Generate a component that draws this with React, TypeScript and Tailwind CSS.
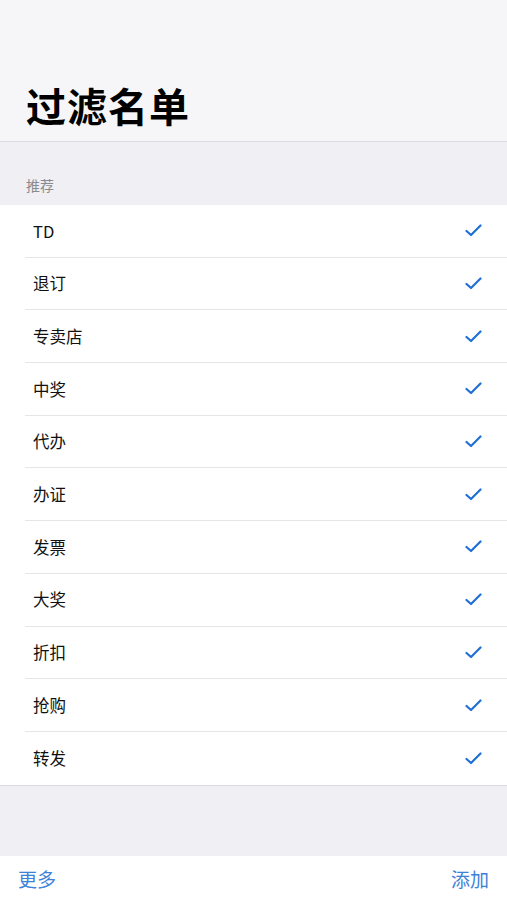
import React from "react";

const items = ["TD", "退订", "专卖店", "中奖", "代办", "办证", "发票", "大奖", "折扣", "抢购", "转发"];

function Check() {
  return (
    <svg width="17" height="13" viewBox="0 0 17 13" fill="none">
      <path d="M1.5 7 L6 11 L15.5 1.5" stroke="#1f6fd6" strokeWidth="2.2" strokeLinecap="round" strokeLinejoin="round" />
    </svg>
  );
}

export default function App() {
  const font = { fontFamily: '"Noto Sans CJK SC", "Noto Sans", sans-serif' };
  return (
    <div className="w-[507px] h-[900px] flex flex-col bg-[#efeff4] overflow-hidden" style={font}>
      <div className="h-[142px] bg-[#f6f6f8] border-b border-[#dcdce0] flex items-end pl-[26px] pb-[10px]">
        <h1 className="text-[40px] leading-[52px] font-semibold text-black tracking-[1px]">过滤名单</h1>
      </div>
      <div className="h-[63px] flex items-end pl-[26px] pb-[10px]">
        <span className="text-[14px] leading-[20px] text-[#8a8a8f]">推荐</span>
      </div>
      <div className="bg-white">
        {items.map((t, i) => (
          <div key={t} className="flex">
            <div className={"flex-1 ml-[25px] h-[52.7px] flex items-center justify-between pl-[8px] pr-[25px] " + (i < items.length - 1 ? "border-b border-[#e6e6ea]" : "")}>
              <span className="text-[16.5px] text-[#111] leading-none">{t}</span>
              <Check />
            </div>
          </div>
        ))}
      </div>
      <div className="border-t border-[#dcdce0] flex-1" />
      <div className="h-[44px] bg-white flex items-center justify-between px-[18px]">
        <span className="text-[19px] text-[#3d82d8] leading-none">更多</span>
        <span className="text-[19px] text-[#3d82d8] leading-none">添加</span>
      </div>
    </div>
  );
}
